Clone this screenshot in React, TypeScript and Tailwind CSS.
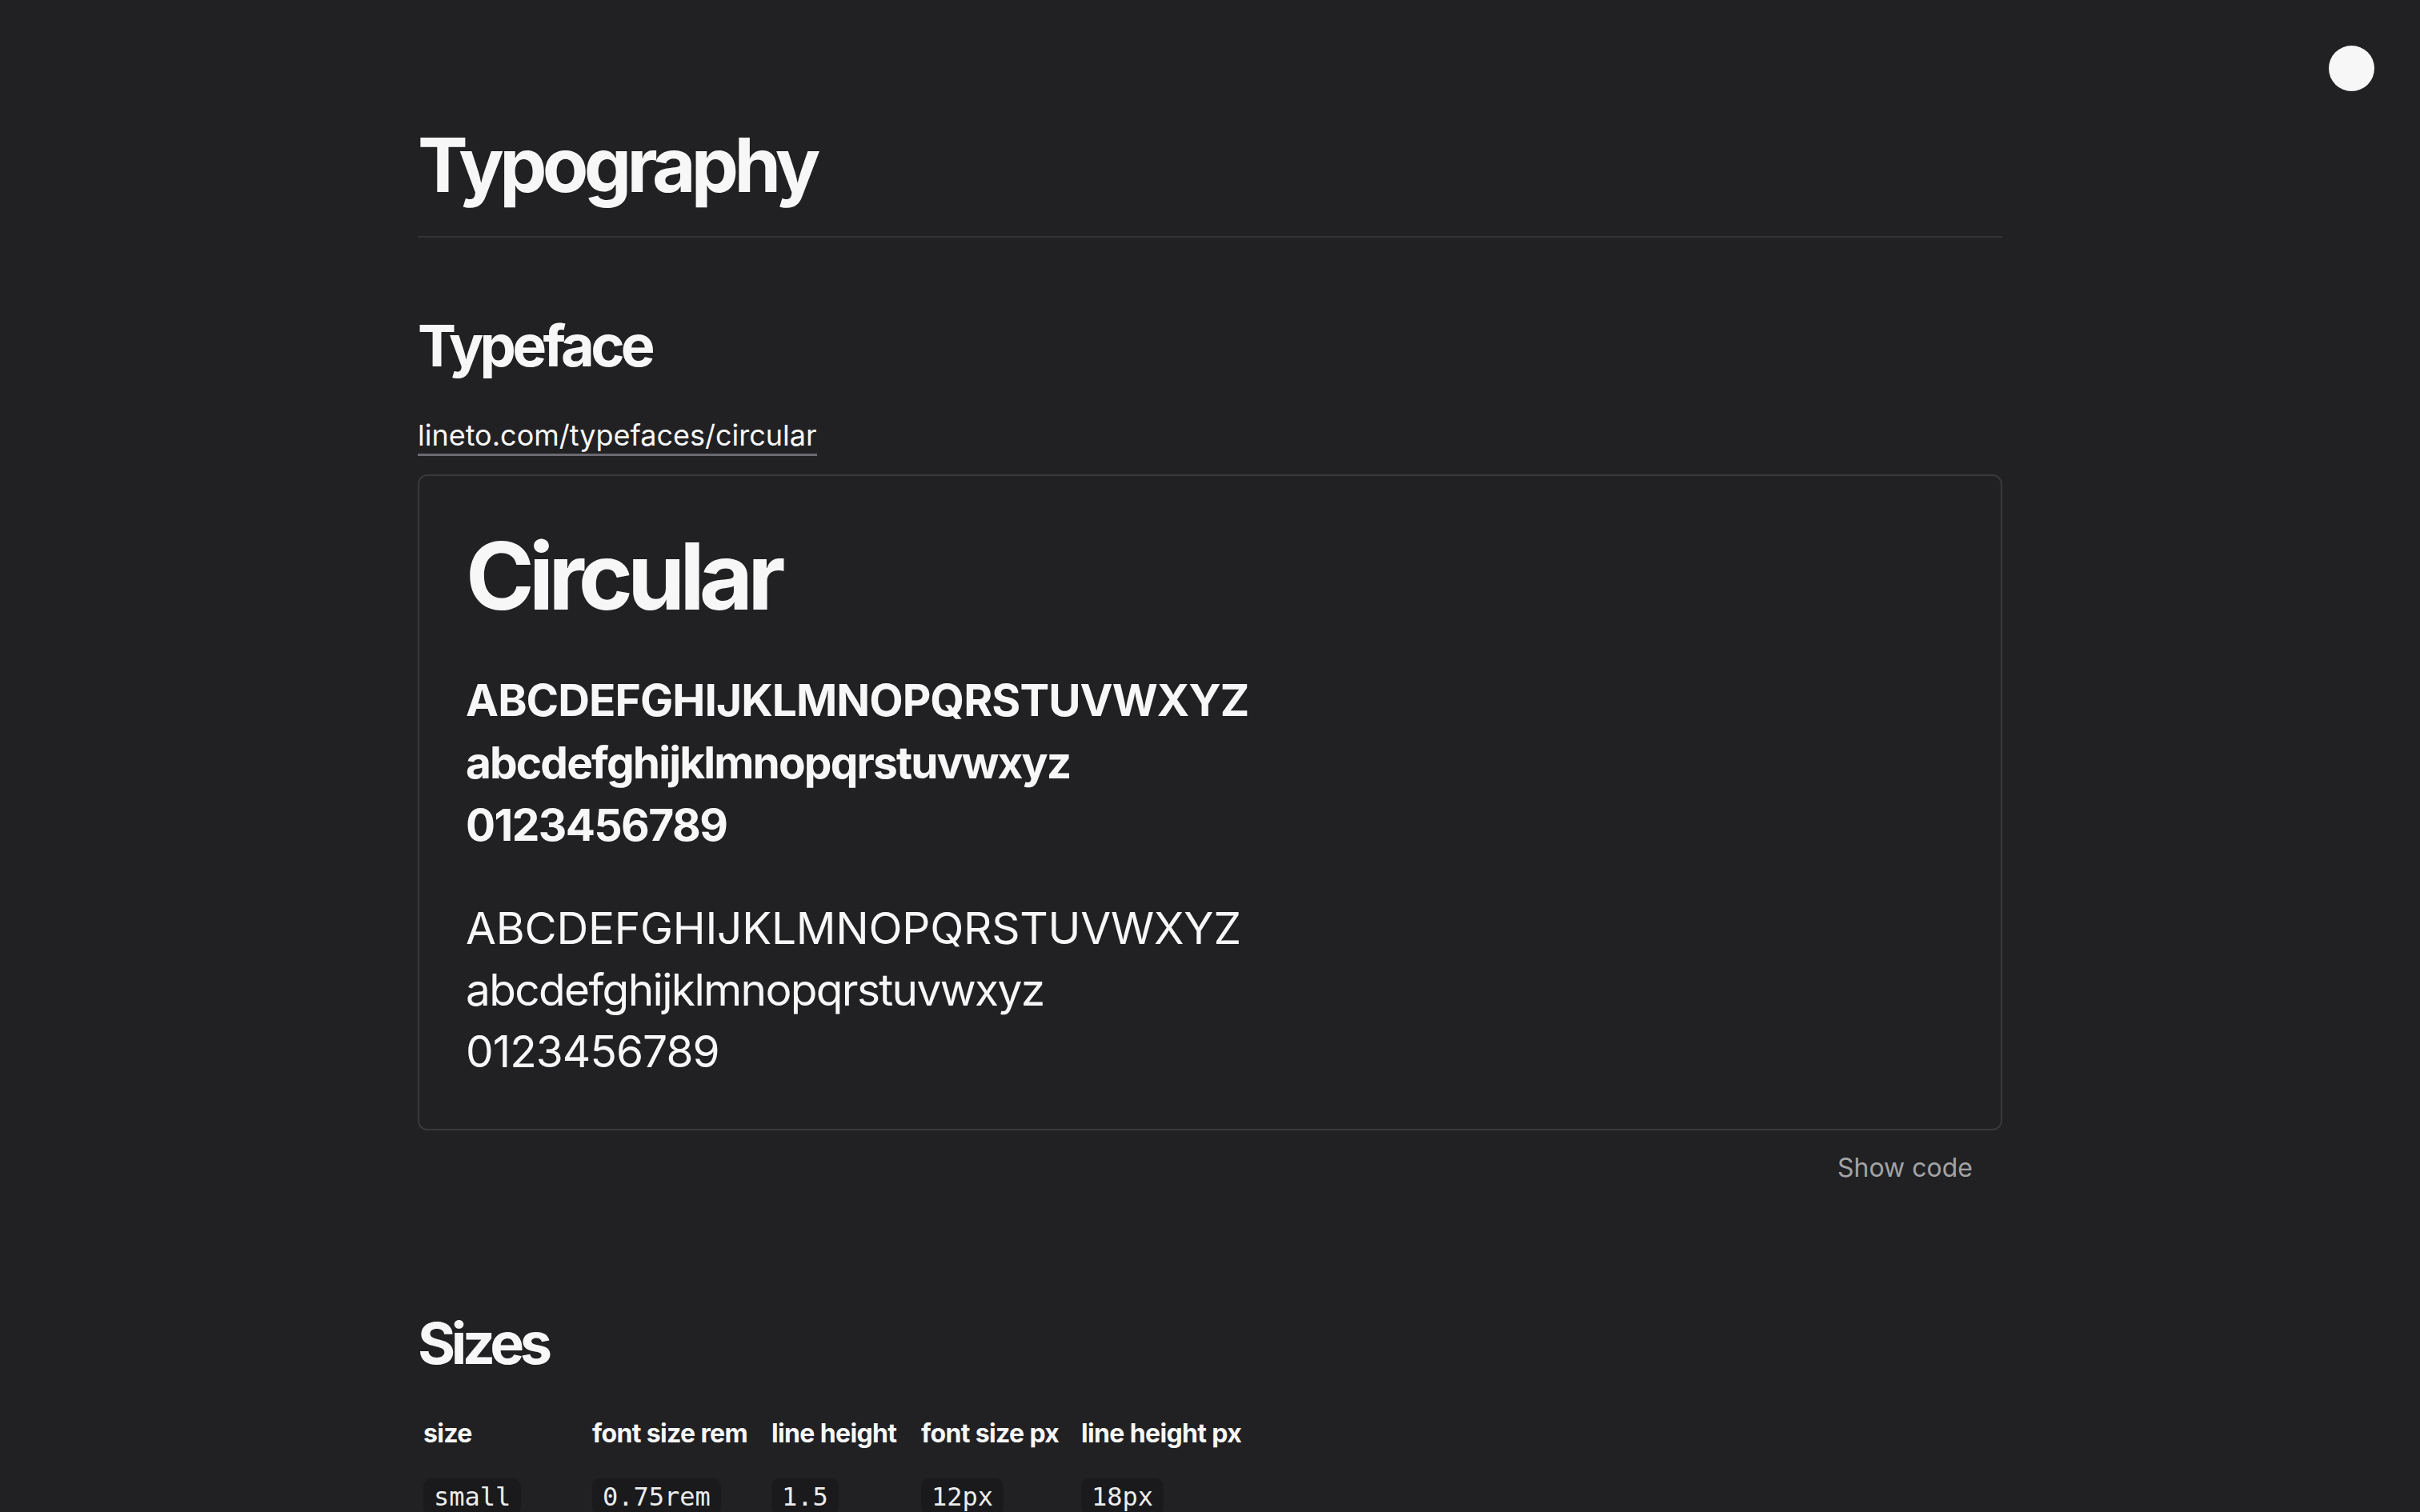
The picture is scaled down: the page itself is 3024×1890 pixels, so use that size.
import { useState } from 'react';

const sizes = [
  { size: 'small', rem: '0.75rem', lineHeight: '1.5', px: '12px', linePx: '18px' },
  { size: 'base', rem: '1rem', lineHeight: '1.5', px: '16px', linePx: '24px' },
  { size: 'medium', rem: '1.125rem', lineHeight: '1.5', px: '18px', linePx: '27px' },
  { size: 'large', rem: '1.5rem', lineHeight: '1.25', px: '24px', linePx: '30px' },
];

const headers = [
  { label: 'size', width: 'w-[211px]' },
  { label: 'font size rem', width: 'w-[224px]' },
  { label: 'line height', width: 'w-[187px]' },
  { label: 'font size px', width: 'w-[200px]' },
  { label: 'line height px', width: 'w-[232px]' },
];

const Code = ({ children }: { children: string }) => (
  <code className="inline-block rounded-[10px] bg-[#1a1a1c] px-[13px] py-[4px] font-[family-name:'DejaVu_Sans_Mono',monospace] text-[32px] leading-[38px] text-[#ececec]">
    {children}
  </code>
);

const App = () => {
  const [showCode, setShowCode] = useState(false);

  return (
    <div className="relative h-screen overflow-hidden bg-[#212123] font-[family-name:Inter,sans-serif] text-[#f7f7f7]">
      {/* theme toggle */}
      <button className="absolute top-[57px] right-[57px] h-[57px] w-[57px] rounded-full bg-[#f7f7f7]" aria-label="toggle theme" />

      <main className="mx-auto w-[1980px] pt-[150px]">
        <h1 className="border-b-2 border-[#343437] pb-[32px] text-[94px] leading-[1.2] font-bold tracking-[-0.06em]">
          Typography
        </h1>

        <h2 className="mt-[92px] text-[72px] leading-[1.2] font-bold tracking-[-0.065em]">Typeface</h2>
        <div className="mt-[46px] flex">
          <a href="#circular" className="border-b-[3px] border-[#6b6a71] text-[36px] leading-[46px]">
            lineto.com/typefaces/circular
          </a>
        </div>

        <div className="mt-[23px] rounded-[12px] border-2 border-[#39393c] p-[58px]">
          <div className="pt-[3px] text-[116px] leading-[128px] font-bold tracking-[-0.06em]">Circular</div>
          <div className="mt-[52px] text-[55px] leading-[78px] font-bold">
            <div className="tracking-[-0.017em]">ABCDEFGHIJKLMNOPQRSTUVWXYZ</div>
            <div className="tracking-[-0.034em]">abcdefghijklmnopqrstuvwxyz</div>
            <div className="tracking-[-0.028em]">0123456789</div>
          </div>
          <div className="mt-[52px] text-[55px] leading-[77px]">
            <div className="tracking-[-0.004em]">ABCDEFGHIJKLMNOPQRSTUVWXYZ</div>
            <div className="tracking-[-0.03em]">abcdefghijklmnopqrstuvwxyz</div>
            <div className="tracking-[-0.017em]">0123456789</div>
          </div>
        </div>
        <div className="mt-[23px] flex justify-end pr-[37px]">
          <button className="text-[32px] leading-[48px] text-[#a3a3a6]" onClick={() => setShowCode(!showCode)}>
            {showCode ? 'Hide code' : 'Show code'}
          </button>
        </div>

        <h2 className="mt-[152px] text-[72px] leading-[1.2] font-bold tracking-[-0.075em]">Sizes</h2>
        <table className="mt-[45px] w-[1054px] table-fixed border-collapse text-left">
          <thead>
            <tr>
              {headers.map((h) => (
                <th
                  key={h.label}
                  className={`${h.width} pr-[21px] pb-[17px] pl-[7px] text-[32px] leading-[48px] font-bold tracking-[-0.02em] whitespace-nowrap`}
                >
                  {h.label}
                </th>
              ))}
            </tr>
          </thead>
          <tbody>
            {sizes.map((row) => (
              <tr key={row.size}>
                <td className="py-[15px] pr-[21px] pl-[7px]"><Code>{row.size}</Code></td>
                <td className="py-[15px] pr-[21px] pl-[7px]"><Code>{row.rem}</Code></td>
                <td className="py-[15px] pr-[21px] pl-[7px]"><Code>{row.lineHeight}</Code></td>
                <td className="py-[15px] pr-[21px] pl-[7px]"><Code>{row.px}</Code></td>
                <td className="py-[15px] pr-[21px] pl-[7px]"><Code>{row.linePx}</Code></td>
              </tr>
            ))}
          </tbody>
        </table>
      </main>
    </div>
  );
};

export default App;
